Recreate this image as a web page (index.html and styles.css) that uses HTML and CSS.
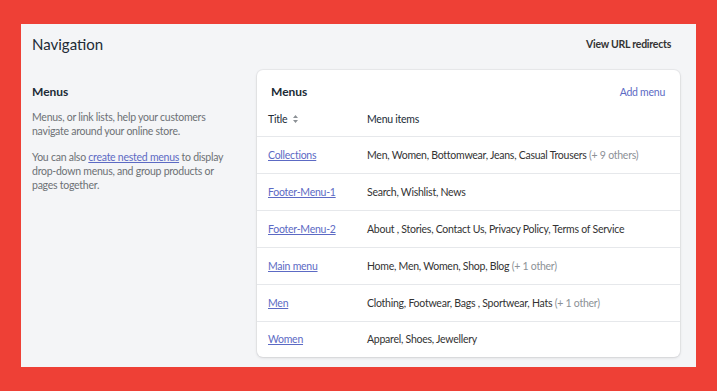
FILE: index.html
```html
<!DOCTYPE html>
<html lang="en">
<head>
    <meta charset="UTF-8">
    <meta name="viewport" content="width=device-width, initial-scale=1.0">
    <title>Navigation</title>
    <link rel="stylesheet" href="styles.css">
</head>
<body>
    <div class="page">
        <div class="page-header">
            <h1>Navigation</h1>
            <a href="#" class="header-action">View URL redirects</a>
        </div>

        <div class="layout">
            <div class="annotation">
                <h2>Menus</h2>
                <p>Menus, or link lists, help your customers navigate around your online store.</p>
                <p>You can also <a href="#">create nested menus</a> to display drop-down menus, and group products or pages together.</p>
            </div>

            <div class="card">
                <div class="card-header">
                    <h3>Menus</h3>
                    <a href="#" class="add-link">Add menu</a>
                </div>
                <table class="menu-table">
                    <thead>
                        <tr>
                            <th class="col-title">Title
                                <svg class="sort-icon" width="5" height="8" viewBox="0 0 5 8"><path d="M2.5 0L5 3H0z M2.5 8L0 5h5z" fill="#8c9196"/></svg>
                            </th>
                            <th>Menu items</th>
                        </tr>
                    </thead>
                    <tbody>
                        <tr>
                            <td><a href="#">Collections</a></td>
                            <td>Men, Women, Bottomwear, Jeans, Casual Trousers <span class="more">(+ 9 others)</span></td>
                        </tr>
                        <tr>
                            <td><a href="#">Footer-Menu-1</a></td>
                            <td>Search, Wishlist, News</td>
                        </tr>
                        <tr>
                            <td><a href="#">Footer-Menu-2</a></td>
                            <td>About , Stories, Contact Us, Privacy Policy, Terms of Service</td>
                        </tr>
                        <tr>
                            <td><a href="#">Main menu</a></td>
                            <td>Home, Men, Women, Shop, Blog <span class="more">(+ 1 other)</span></td>
                        </tr>
                        <tr>
                            <td><a href="#">Men</a></td>
                            <td>Clothing, Footwear, Bags , Sportwear, Hats <span class="more">(+ 1 other)</span></td>
                        </tr>
                        <tr>
                            <td><a href="#">Women</a></td>
                            <td>Apparel, Shoes, Jewellery</td>
                        </tr>
                    </tbody>
                </table>
            </div>
        </div>
    </div>
</body>
</html>
```

FILE: styles.css
```css
* {
    margin: 0;
    padding: 0;
    box-sizing: border-box;
}

body {
    font-family: 'Lato', 'Noto Sans', sans-serif;
    font-size: 10.5px;
    letter-spacing: -0.25px;
    background-color: #ee4036;
    padding: 24px 21px;
    height: 100vh;
    color: #212b36;
}

a {
    color: #5c6ac4;
}

.page {
    background-color: #f4f5f7;
    height: 343px;
    padding: 0 16px 0 11px;
}

.page-header {
    display: flex;
    justify-content: space-between;
    align-items: center;
    height: 40px;
    padding-right: 9px;
}

.page-header h1 {
    font-size: 15px;
    font-weight: 400;
    letter-spacing: 0;
    color: #212b36;
}

.header-action {
    font-size: 10.5px;
    font-weight: 700;
    color: #333;
    text-decoration: none;
}

.layout {
    display: grid;
    grid-template-columns: 225px 1fr;
    margin-top: 6px;
}

.annotation {
    padding: 14px 29px 0 0;
}

.annotation h2 {
    font-size: 12px;
    font-weight: 700;
    letter-spacing: 0;
    line-height: 16px;
    margin-bottom: 10px;
}

.annotation p {
    line-height: 14px;
    color: #6d7175;
    margin-bottom: 12px;
}

.card {
    background-color: #fff;
    border-radius: 6px;
    box-shadow: 0 0 0 1px rgba(63, 63, 68, 0.05), 0 1px 3px rgba(63, 63, 68, 0.15);
    overflow: hidden;
}

.card-header {
    display: flex;
    justify-content: space-between;
    align-items: center;
    padding: 14px 15px 0 14px;
    margin-bottom: 2px;
}

.card-header h3 {
    font-size: 12px;
    font-weight: 700;
    letter-spacing: 0;
    line-height: 16px;
}

.add-link {
    text-decoration: none;
    color: #5c6ac4;
}

.menu-table {
    width: 100%;
    border-collapse: collapse;
}

.menu-table th {
    text-align: left;
    font-weight: 400;
    height: 34px;
    color: #212b36;
    border-bottom: 1px solid #e6e8eb;
}

.menu-table td {
    height: 37px;
    border-bottom: 1px solid #e6e8eb;
    color: #333;
}

.menu-table tbody tr:last-child td {
    border-bottom: none;
    height: 36px;
}

.menu-table th:first-child,
.menu-table td:first-child {
    padding-left: 11px;
    width: 110px;
}

.sort-icon {
    margin-left: 3px;
    vertical-align: 0;
}

.more {
    color: #8c9196;
}
```
